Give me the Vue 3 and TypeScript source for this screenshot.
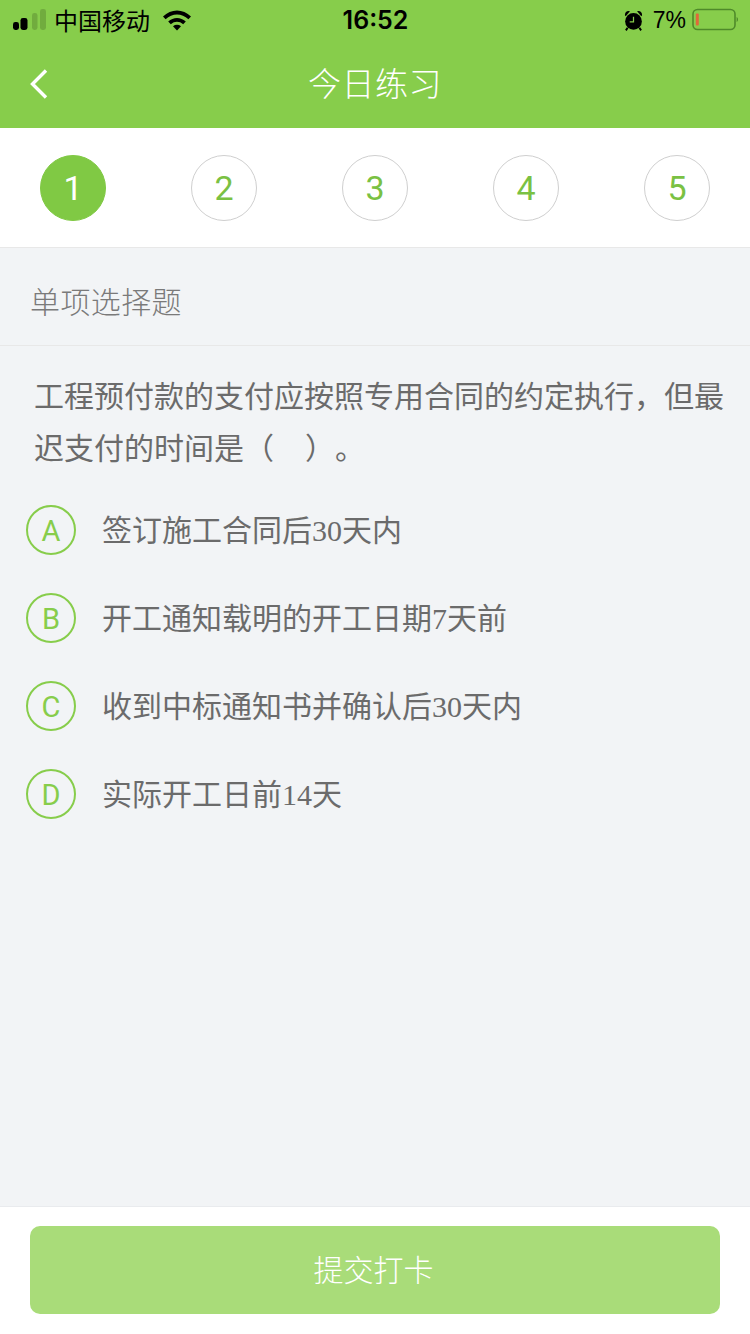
<script setup lang="ts">
import { ref } from 'vue'

const steps = [1, 2, 3, 4, 5]
const current = ref(1)

const options = [
  { key: 'A', text: '签订施工合同后30天内' },
  { key: 'B', text: '开工通知载明的开工日期7天前' },
  { key: 'C', text: '收到中标通知书并确认后30天内' },
  { key: 'D', text: '实际开工日前14天' },
]
</script>

<template>
  <div class="page">
    <header class="head">
      <div class="status">
        <div class="status-left">
          <svg class="signal" width="34" height="24" viewBox="0 0 34 24">
            <rect x="0" y="14" width="6" height="8" rx="2.4" fill="#000" />
            <rect x="7.5" y="10" width="7" height="12" rx="2.4" fill="#000" />
            <rect x="19" y="5" width="5.5" height="17" rx="2.4" fill="#000" opacity=".16" />
            <rect x="27" y="1" width="6" height="21" rx="2.4" fill="#000" opacity=".16" />
          </svg>
          <span class="carrier">中国移动</span>
          <svg class="wifi" width="30" height="22" viewBox="0 0 30 22">
            <path d="M1 7.5C9 -0.5 21 -0.5 29 7.5L26.4 10.2C19.8 3.8 10.2 3.8 3.6 10.2Z" fill="#000" />
            <path d="M6.2 12.6C11.4 7.8 18.6 7.8 23.8 12.6L21.2 15.3C17.4 12 12.6 12 8.8 15.3Z" fill="#000" />
            <path d="M11 17.2C13.4 15.4 16.6 15.4 19 17.2L15 21.4Z" fill="#000" />
          </svg>
        </div>
        <span class="clock">16:52</span>
        <div class="status-right">
          <svg class="alarm" width="19" height="21" viewBox="0 0 20 22">
            <circle cx="10" cy="12" r="8.8" fill="#000" />
            <path d="M1 5.6C0.6 2.6 3 0.4 6.2 1.2L1.8 6.4Z" fill="#000" />
            <path d="M19 5.6C19.4 2.6 17 0.4 13.8 1.2L18.2 6.4Z" fill="#000" />
            <path d="M3.8 18.6L2 21.4M16.2 18.6L18 21.4" stroke="#000" stroke-width="2" />
            <path d="M10 7V12.4H6" fill="none" stroke="#87cd4b" stroke-width="1.3" />
          </svg>
          <span class="percent">7%</span>
          <svg class="battery" width="46" height="24" viewBox="0 0 46 24">
            <rect x="1" y="1.5" width="42" height="20" rx="4.5" fill="none" stroke="#4f8a2a" stroke-width="1.6" />
            <rect x="3.8" y="5.5" width="3" height="12" rx="1" fill="#e0693a" />
            <path d="M44.6 9C45.6 9.5 46 10.4 46 11.5C46 12.6 45.6 13.5 44.6 14Z" fill="#4f8a2a" />
          </svg>
        </div>
      </div>
      <div class="nav">
        <svg class="back" width="20" height="32" viewBox="0 0 20 32">
          <path d="M17 2.5L3.5 16L17 29.5" fill="none" stroke="#fff" stroke-width="3.4" />
        </svg>
        <h1 class="title">今日练习</h1>
      </div>
    </header>

    <div class="steps">
      <div
        v-for="n in steps"
        :key="n"
        class="step"
        :class="{ active: n === current }"
      >
        {{ n }}
      </div>
    </div>

    <div class="kind">单项选择题</div>

    <main class="body">
      <p class="question">工程预付款的支付应按照专用合同的约定执行，但最迟支付的时间是（&nbsp;&nbsp;&nbsp;&nbsp;）。</p>
      <ul class="options">
        <li v-for="o in options" :key="o.key" class="option">
          <span class="letter">{{ o.key }}</span>
          <span class="text">{{ o.text }}</span>
        </li>
      </ul>
    </main>

    <footer class="foot">
      <button class="submit" type="button">提交打卡</button>
    </footer>
  </div>
</template>

<style scoped>
.page {
  display: flex;
  flex-direction: column;
  height: 1334px;
  overflow: hidden;
  background: #f2f4f6;
  font-family: "Noto Sans CJK SC", "Liberation Sans", sans-serif;
  text-spacing-trim: space-all;
}

.head {
  background: #87cd4b;
}

.status {
  display: grid;
  grid-template-columns: 1fr auto 1fr;
  align-items: center;
  height: 40px;
  padding: 0 12px 0 13px;
  color: #000;
}

.status-left {
  display: flex;
  align-items: center;
}

.signal {
  margin-right: 8px;
}

.carrier {
  margin-left: -1px;
  font-size: 24px;
  line-height: 40px;
}

.wifi {
  margin-left: 12px;
}

.clock {
  font-family: Inter, "Liberation Sans", sans-serif;
  font-size: 25px;
  font-weight: 600;
}

.status-right {
  display: flex;
  align-items: center;
  justify-content: flex-end;
}

.percent {
  margin: 0 6px 0 10px;
  font-family: "Liberation Sans", sans-serif;
  font-size: 23px;
}

.nav {
  position: relative;
  display: flex;
  align-items: center;
  justify-content: center;
  height: 88px;
}

.back {
  position: absolute;
  left: 29px;
  top: 28px;
}

.title {
  margin: 0 0 4px;
  color: #fff;
  font-size: 33px;
  font-weight: 300;
  letter-spacing: .5px;
}

.steps {
  display: flex;
  justify-content: space-between;
  align-items: center;
  height: 119px;
  padding: 0 40px;
  background: #fff;
  border-bottom: 1px solid #e8e8e8;
  box-sizing: content-box;
}

.step {
  display: flex;
  align-items: center;
  justify-content: center;
  width: 66px;
  height: 66px;
  box-sizing: border-box;
  border: 1px solid #cfcfcf;
  border-radius: 50%;
  color: #7ac143;
  font-family: Roboto, "Liberation Sans", sans-serif;
  font-size: 34px;
}

.step.active {
  border-color: #80c944;
  background: #80c944;
  color: #fff;
}

.kind {
  height: 97px;
  padding-left: 30px;
  border-bottom: 1px solid #e8e8e8;
  color: #7a7a7a;
  font-size: 30px;
  line-height: 104px;
  font-weight: 300;
  letter-spacing: .4px;
}

.body {
  flex: 1;
  min-height: 0;
}

.question {
  margin: 22px 20px 0 34px;
  color: #6b6b6b;
  font-size: 30px;
  line-height: 52px;
  word-spacing: 1px;
}

.options {
  margin: 14px 0 0;
  padding: 0;
  list-style: none;
}

.option {
  display: flex;
  align-items: center;
  height: 88px;
  padding-left: 26px;
}

.letter {
  display: flex;
  align-items: center;
  justify-content: center;
  width: 50px;
  height: 50px;
  padding-top: 2px;
  box-sizing: border-box;
  border: 2px solid #87cd4b;
  border-radius: 50%;
  color: #87cd4b;
  font-family: Roboto, "Liberation Sans", sans-serif;
  font-size: 29px;
}

.text {
  margin-left: 26px;
  padding-bottom: 4px;
  color: #6b6b6b;
  font-family: "Liberation Serif", "Noto Sans CJK SC", serif;
  font-size: 30px;
}

.foot {
  height: 128px;
  padding: 19px 30px 0;
  box-sizing: border-box;
  background: #fff;
  border-top: 1px solid #e9ebee;
}

.submit {
  display: block;
  width: 100%;
  height: 88px;
  padding: 0 3px 4px 0;
  border: 0;
  border-radius: 10px;
  background: #a9dc79;
  color: #fff;
  font-family: inherit;
  font-size: 30px;
  font-weight: 300;
}
</style>

<style>
html,
body {
  margin: 0;
  background: #f2f4f6;
}
</style>
